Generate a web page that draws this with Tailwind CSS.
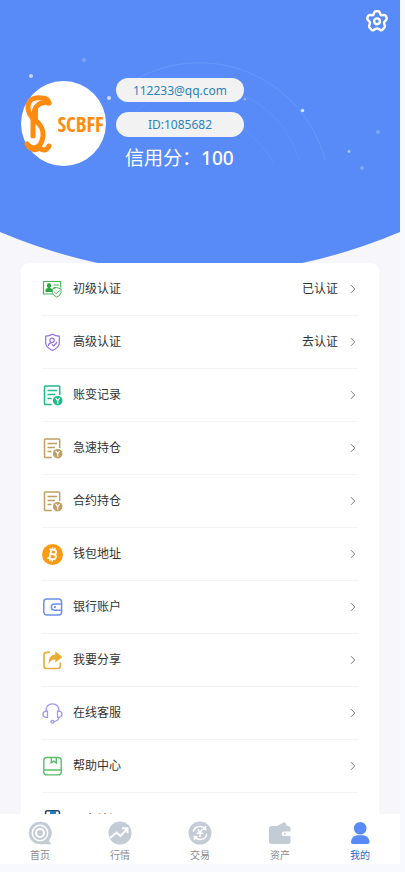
<!DOCTYPE html>
<html lang="zh-CN">
<head>
<meta charset="utf-8">
<meta name="viewport" content="width=device-width, initial-scale=1">
<title>我的</title>
<script src="https://cdn.jsdelivr.net/npm/@tailwindcss/browser@4"></script>
</head>
<body class="bg-[#f8f9fe] font-['Noto_Sans','Noto_Sans_CJK_SC',sans-serif] text-[#333]">
<svg class="hidden" aria-hidden="true">
  <symbol id="chevron" viewBox="0 0 10 10"><path d="M3 1.2 6.8 5 3 8.8" fill="none" stroke="#777" stroke-width="1"/></symbol>
  <symbol id="record" viewBox="0 0 21 21">
    <path d="M17.700 10V1.800a.8.8 0 0 0-.8-.8H3.300a.8.8 0 0 0-.8.8v16.900a.8.8 0 0 0 .8.8h6.400M5.500 5.500h9.500M5.500 9.500h7.500M5.500 13.500h4" fill="none" stroke="currentColor" stroke-width="1.500"/>
    <circle cx="15.700" cy="15.700" r="4.800" fill="currentColor"/>
    <path d="m13.700 13 2 2.700 2-2.700M15.700 15.500v3.200" fill="none" stroke="#fff" stroke-width="1.200"/>
  </symbol>
</svg>
<div class="flex h-screen flex-col pr-[5px] pb-2">
  <main class="min-h-0 flex-1 overflow-hidden bg-[#f6f6fb]">
    <header class="relative pt-[10px] pb-[91px]">
      <svg class="absolute inset-0 h-full w-full" viewBox="0 0 400 263" preserveAspectRatio="none" aria-hidden="true">
        <path d="M0 0H400V232Q200 316 0 232Z" fill="#588bf8"/>
        <path d="M128 84A130 130 0 0 1 325 160" fill="none" stroke="#fff" stroke-opacity=".1"/>
        <path d="M134 113A101 101 0 0 1 299 160M245 130Q264 145 274 164" fill="none" stroke="#fff" stroke-opacity=".06"/>
        <g fill="#fff">
          <circle cx="84" cy="60" r="2" opacity=".22"/><circle cx="31" cy="76" r="2" opacity=".65"/>
          <circle cx="109" cy="98" r="2" opacity=".7"/><circle cx="245" cy="99" r="1.500" opacity=".3"/>
          <circle cx="302.500" cy="110.500" r="1.800" opacity=".75"/><circle cx="378" cy="132" r="2" opacity=".22"/>
          <circle cx="349" cy="151.500" r="1.400" opacity=".5"/><circle cx="362" cy="168" r="2" opacity=".25"/>
        </g>
      </svg>
      <div class="relative flex justify-end pr-3">
        <button type="button" aria-label="设置" class="size-[22px]">
          <svg viewBox="0 0 22 22" class="size-full" fill="none" stroke="#fff" stroke-width="2.400" stroke-linejoin="round">
            <path d="M8.200 2.500Q8.800 1.200 10 1.200h2Q13.200 1.200 13.800 2.500L14.400 4.400Q14.900 5.400 16 5.200L18 4.900Q19.300 4.800 19.900 6L20.600 7.900Q21 9.200 20 10.100L18.600 11.500Q17.800 12.300 18.100 13.300L18.800 15.600Q19.100 16.900 18.200 17.800L16.600 19.600Q15.400 20.700 14.200 19.900L12.300 18.800Q11 18.100 9.700 18.800L7.800 19.900Q6.600 20.700 5.400 19.600L3.800 17.800Q2.900 16.900 3.200 15.600L3.900 13.300Q4.200 12.300 3.400 11.500L2 10.100Q1 9.200 1.400 7.900L2.100 6Q2.700 4.800 4 4.900L6 5.200Q7.100 5.400 7.600 4.400Z"/>
            <circle cx="11" cy="11.300" r="2.900"/>
          </svg>
        </button>
      </div>
      <div class="relative mt-[46px] flex items-start gap-[10px] pl-[21px]">
        <svg class="mt-[3px] size-[85px]" viewBox="0 0 85 85" role="img" aria-label="SCBFF">
          <circle cx="42.500" cy="42.500" r="42.500" fill="#fff"/>
          <g fill="none" stroke="#ff8c10" stroke-linecap="round" stroke-linejoin="round">
            <path d="M28 22Q27 17 21 17Q8 15 7 26Q7 34 14 39Q23 46 22 55Q21 65 14 67Q9 67 6 63" stroke-width="5"/>
            <path d="M28 22Q20 20 15 26Q12 31 12 41V55" stroke-width="5"/>
            <path d="M7 65Q13 71 19 67Q24 72 28 65" stroke-width="5"/>
            <path d="M15 28V40" stroke-width="4"/>
          </g>
          <text x="59.500" y="50.500" text-anchor="middle" font-family="'Open Sans Condensed','Liberation Sans Narrow','Liberation Sans',sans-serif" font-size="21" font-weight="700" fill="#ff8c10">SCBFF</text>
        </svg>
        <div>
          <p class="flex h-6 w-32 items-center justify-center rounded-full bg-[#f2f2f2] pt-px text-[12px] text-[#2a83ba]">112233@qq.com</p>
          <p class="mt-[10px] flex h-[25px] w-32 items-center justify-center rounded-full bg-[#f2f2f2] pt-px text-[12px] text-[#2a83ba]">ID:1085682</p>
          <p class="mt-[7px] pl-[9px] text-[19px] leading-7 text-white">信用分：<span class="font-medium">100</span></p>
        </div>
      </div>
    </header>
    <ul class="relative mx-[21px] rounded-lg bg-white px-[21px] text-[12px]">
      <li><a href="#" class="flex h-[53px] items-center border-b border-[#f4f4f6]">
        <svg class="size-[21px]" viewBox="0 0 21 21" fill="none" stroke="#45b955">
          <path d="M11 15H1.500V2.500h17.200v6" stroke-width="1.200"/><path d="M11.500 6h5.500M11.500 8.500h3" stroke-width="1"/>
          <path d="M3.500 13V11q0-1.500 2.500-2-1.200-1-1.200-2.400Q4.800 4.100 7 4.100T9.200 6.600Q9.200 8 8 9q2.500.5 2.500 2v2Z" fill="#2ba845" stroke="none"/>
          <path d="M14.700 8.500l4.300 1.500v3.500q0 2.800-4.300 4.500-4.300-1.700-4.300-4.500V10Z" fill="#fff"/><path d="m12.500 13.100 1.800 1.800 3-3.400"/>
        </svg><span class="ml-[10px] flex-1">初级认证</span><span class="mr-[10px]">已认证</span><svg class="size-[10px]"><use href="#chevron"/></svg></a></li>
      <li><a href="#" class="flex h-[53px] items-center border-b border-[#f4f4f6]">
        <svg class="size-[21px]" viewBox="0 0 21 21" fill="none" stroke="#9270e0" stroke-width="1.200">
          <path d="M10.500 2.200Q13.500 4 17.300 4.200V11q0 4.500-6.800 7.500Q3.700 15.500 3.700 11V4.200Q7.500 4 10.500 2.200Z"/>
          <circle cx="10" cy="8.300" r="2.200"/><path d="M6.300 14q.5-3.200 3.500-3.400M10 12.500l1.800 1.500 3.300-4"/>
        </svg><span class="ml-[10px] flex-1">高级认证</span><span class="mr-[10px]">去认证</span><svg class="size-[10px]"><use href="#chevron"/></svg></a></li>
      <li><a href="#" class="flex h-[53px] items-center border-b border-[#f4f4f6]">
        <svg class="size-[21px] text-[#1dbb88]"><use href="#record"/></svg><span class="ml-[10px] flex-1">账变记录</span><svg class="size-[10px]"><use href="#chevron"/></svg></a></li>
      <li><a href="#" class="flex h-[53px] items-center border-b border-[#f4f4f6]">
        <svg class="size-[21px] text-[#bda066]"><use href="#record"/></svg><span class="ml-[10px] flex-1">急速持仓</span><svg class="size-[10px]"><use href="#chevron"/></svg></a></li>
      <li><a href="#" class="flex h-[53px] items-center border-b border-[#f4f4f6]">
        <svg class="size-[21px] text-[#bda066]"><use href="#record"/></svg><span class="ml-[10px] flex-1">合约持仓</span><svg class="size-[10px]"><use href="#chevron"/></svg></a></li>
      <li><a href="#" class="flex h-[53px] items-center border-b border-[#f4f4f6]">
        <svg class="size-[21px]" viewBox="0 0 21 21" fill="none" stroke="#fff">
          <circle cx="10.500" cy="10.500" r="10.500" fill="#fa9b12" stroke="none"/>
          <g transform="rotate(13 10.500 10.500)"><path d="M8.300 5.800h3q2.300 0 2.300 2.200T11.300 10.200h-3M8.300 10.200h3.500q2.500 0 2.500 2.400T11.800 15H8.300ZM8.300 5.800V15" stroke-width="1.900"/><path d="M6 5.800h3M6 15h3M9.300 3.500v2.500M11.600 3.500v2.500M9.300 15v2.500M11.600 15v2.500" stroke-width="1.300"/></g>
        </svg><span class="ml-[10px] flex-1">钱包地址</span><svg class="size-[10px]"><use href="#chevron"/></svg></a></li>
      <li><a href="#" class="flex h-[53px] items-center border-b border-[#f4f4f6]">
        <svg class="size-[21px]" viewBox="0 0 21 21" fill="none" stroke="#6d90ea" stroke-width="1.500">
          <rect x="1.800" y="2" width="17.800" height="16" rx="3"/><path d="M19.600 7h-7q-3.300 0-3.300 3.100t3.300 3.100h7"/><path d="M12 10.100h2" stroke-width="1.600"/>
        </svg><span class="ml-[10px] flex-1">银行账户</span><svg class="size-[10px]"><use href="#chevron"/></svg></a></li>
      <li><a href="#" class="flex h-[53px] items-center border-b border-[#f4f4f6]">
        <svg class="size-[21px]" viewBox="0 0 21 21" fill="none" stroke="#e9b23f" stroke-width="1.700" stroke-linecap="round">
          <path d="M7.500 2.300H4.500Q2 2.300 2 4.800V16Q2 18.500 4.500 18.500h11.300q2.500 0 2.500-2.500V13"/>
          <path d="M13.300 1.300 20.500 7.100 13.300 12.600V9.500Q8.500 9.600 6.500 14.300 6.300 5.300 13.300 4.600Z" fill="#e9ac35" stroke="none"/>
        </svg><span class="ml-[10px] flex-1">我要分享</span><svg class="size-[10px]"><use href="#chevron"/></svg></a></li>
      <li><a href="#" class="flex h-[53px] items-center border-b border-[#f4f4f6]">
        <svg class="size-[21px]" viewBox="0 0 21 21" fill="none" stroke="#9c9af0" stroke-width="1.300">
          <path d="M4 8.300Q4 .8 10.500.8T17 8.300M17 14.300Q16 18.300 11.500 18.600"/>
          <path d="M5.500 8.100v6.200H4Q1 13.800 1 11.200T4 8.100ZM15.500 8.100v6.200H17q3-.5 3-3.100T17 8.100Z"/><circle cx="10.300" cy="18.700" r="1.400"/>
        </svg><span class="ml-[10px] flex-1">在线客服</span><svg class="size-[10px]"><use href="#chevron"/></svg></a></li>
      <li><a href="#" class="flex h-[53px] items-center border-b border-[#f4f4f6]">
        <svg class="size-[21px]" viewBox="0 0 21 21" fill="none" stroke="#5cbd68" stroke-width="1.400">
          <rect x="1.800" y="1.500" width="17.400" height="17.400" rx="3"/><path d="M2 14h17M9.300 1.700v5.200l2.500-1.800 2.500 1.800V1.700"/>
        </svg><span class="ml-[10px] flex-1">帮助中心</span><svg class="size-[10px]"><use href="#chevron"/></svg></a></li>
      <li><a href="#" class="flex h-[53px] items-center">
        <svg class="size-[21px]" viewBox="0 0 21 21"><rect x="3.500" y="1.700" width="14" height="17" rx="2" fill="#fff" stroke="#25485f" stroke-width="1.500"/><path d="M8 2h6v7l-3-2-3 2Z" fill="#1b82d2"/></svg><span class="ml-[10px] flex-1">平台认证</span><svg class="size-[10px]"><use href="#chevron"/></svg></a></li>
    </ul>
  </main>
  <nav class="grid h-[50px] shrink-0 grid-cols-5 bg-white text-[10px] leading-[14px] text-[#8b8b8b]">
    <a href="#" class="flex flex-col items-center gap-[3px] pt-[7px]">
      <svg class="size-6" viewBox="0 0 24 24" fill="none"><path d="M12 .8a11.200 11.200 0 1 0 0 22.400h11.500l-2.700-3.700A11.200 11.200 0 0 0 12 .8Z" fill="#c3ccd5"/><circle cx="12" cy="12" r="7.700" stroke="#fff" stroke-width="1.400"/><circle cx="12" cy="12" r="4" stroke="#fff" stroke-width="2"/></svg>首页</a>
    <a href="#" class="flex flex-col items-center gap-[3px] pt-[7px]">
      <svg class="size-6" viewBox="0 0 24 24" fill="none"><circle cx="12" cy="12" r="11.500" fill="#c3ccd5"/><path d="M2 17l6.500-5.500 4 3.500L19 8M14 7.300h5.500v5" stroke="#fff" stroke-width="2"/></svg>行情</a>
    <a href="#" class="flex flex-col items-center gap-[3px] pt-[7px]">
      <svg class="size-6" viewBox="0 0 24 24" fill="none"><circle cx="12" cy="12" r="11.500" fill="#c3ccd5"/><g stroke="#fff" stroke-width="1.500"><path d="M5.300 11Q6 5.700 12 5.600q3.500 0 5.500 2.400V5M18.700 13Q18 18.300 12 18.400q-3.500 0-5.500-2.400v3M17.800 8.300H14.500M6.200 15.700H9.500"/><path d="m9.800 8.500 2.200 2.700 2.200-2.700M12 11.500v4.500M8.800 12.200h6.400"/></g></svg>交易</a>
    <a href="#" class="flex flex-col items-center gap-[3px] pt-[7px]">
      <svg class="size-6" viewBox="0 0 24 24"><path d="M8 5.500 15.500 1.500q1.500-.7 2.200 1L19 5.500Z" fill="#c3ccd5"/><path d="M3.500 5H20q2.500 0 2.500 2.500v3H16q-2.300 0-2.300 2.300t2.300 2.300h6.500v5.400Q22.500 23 20 23H3.500Q1 23 1 20.500v-13Q1 5 3.500 5Z" fill="#c3ccd5"/><circle cx="16.800" cy="12.800" r="1" fill="#c3ccd5"/></svg>资产</a>
    <a href="#" aria-current="page" class="flex flex-col items-center gap-[3px] pt-[7px] text-[#2c68c8]">
      <svg class="size-6" viewBox="0 0 24 24" fill="#588bf8"><circle cx="12.200" cy="7.200" r="6.300"/><path d="M3 20.500Q4 14.300 10 14.300h4.500q6 0 7 6.200.3 2.500-2 2.500H5q-2.300 0-2-2.500Z"/></svg>我的</a>
  </nav>
</div>
</body>
</html>
